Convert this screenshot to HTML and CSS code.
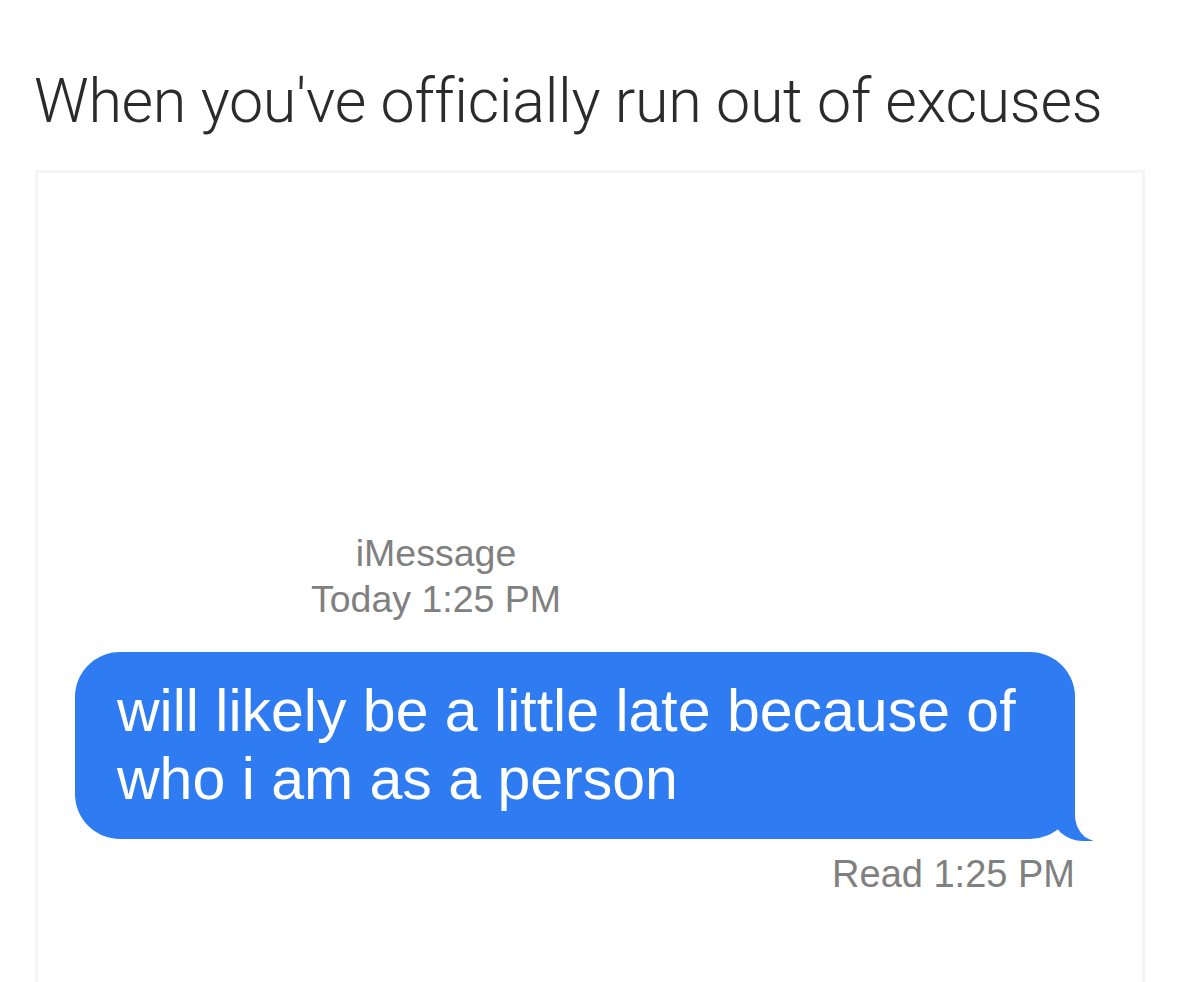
FILE: index.html
```html
<!DOCTYPE html>
<html lang="en">
<head>
    <meta charset="UTF-8">
    <meta name="viewport" content="width=device-width, initial-scale=1.0">
    <title>Out of excuses</title>
    <link rel="stylesheet" href="styles.css">
</head>
<body>

    <h1 class="title">When you've officially run out of excuses</h1>

    <div class="chat">
        <div class="stamp">
            <div>iMessage</div>
            <div>Today 1:25 PM</div>
        </div>
        <div class="bubble">will likely be a little late because of who i am as a person</div>
        <div class="read">Read 1:25 PM</div>
    </div>

</body>
</html>
```

FILE: styles.css
```css
body {
    margin: 0;
    background: #fff;
    font-family: "Liberation Sans", Arial, sans-serif;
    overflow: hidden;
}
.title {
    margin: 0;
    padding: 64px 0 0 34px;
    font-family: Roboto, "Liberation Sans", sans-serif;
    font-weight: 300;
    font-size: 61px;
    line-height: 74px;
    color: #2b2b2b;
    letter-spacing: -0.3px;
}
.chat {
    margin: 32px 0 0 35px;
    width: 1104px;
    height: 809px;
    border: 3px solid #f4f4f4;
    border-bottom: none;
}
.stamp {
    width: 796px;
    padding-top: 357px;
    text-align: center;
    font-size: 37.5px;
    line-height: 46px;
    color: #808080;
}
.bubble {
    position: relative;
    margin: 30px 0 0 37px;
    width: 958px;
    padding: 25px 0 26px 42px;
    background: #2f7cf2;
    color: #fff;
    font-size: 59px;
    line-height: 68px;
    border-radius: 45px;
}
.bubble::before,
.bubble::after {
    content: "";
    position: absolute;
    bottom: -2px;
    height: 50px;
}
.bubble::before {
    right: -18px;
    width: 42px;
    background: #2f7cf2;
    border-bottom-left-radius: 32px 30px;
}
.bubble::after {
    right: -56px;
    width: 56px;
    background: #fff;
    border-bottom-left-radius: 22px 26px;
}
.read {
    margin-top: 12px;
    padding-right: 67px;
    text-align: right;
    font-size: 38px;
    line-height: 46px;
    color: #808080;
}
```
